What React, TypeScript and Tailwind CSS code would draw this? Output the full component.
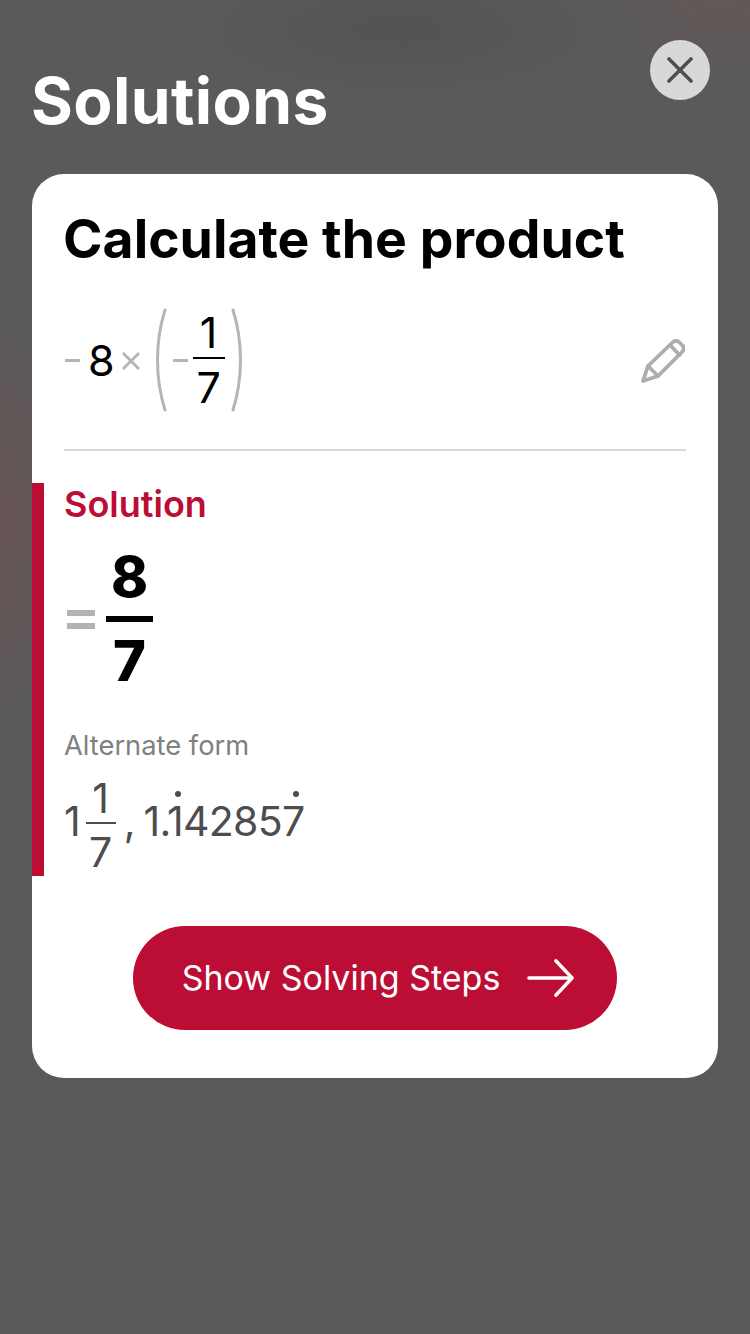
const SANS = 'font-["Inter","Liberation_Sans",sans-serif]';

// Tall bracket drawn around the fraction
function Paren({ flip = false }: { flip?: boolean }) {
  return (
    <svg width="12" height="104" viewBox="0 0 12 104" className={flip ? 'scale-x-[-1]' : ''}>
      <path d="M10 2 C 0 34, 0 70, 10 102" fill="none" stroke="#b5b5b5" strokeWidth="3" strokeLinecap="round" />
    </svg>
  );
}

function Fraction() {
  return (
    <div className="flex flex-col items-center w-[32px]">
      <span className="text-[43px] leading-[46px] h-[46px] -mt-[2px] text-black">1</span>
      <div className="w-full h-[2px] mt-[2px] bg-black" />
      <span className="text-[43px] leading-[46px] h-[50px] pt-[5px] text-black">7</span>
    </div>
  );
}

function Dotted({ children }: { children: string }) {
  return (
    <span className="relative">
      {children}
      <span className="absolute left-[calc(50%+3px)] -translate-x-1/2 top-[-5px] w-[6px] h-[6px] rounded-full bg-[#4d4d4d]" />
    </span>
  );
}

export default function App() {
  return (
    <div
      className={`w-[750px] h-[1334px] overflow-hidden bg-[#5a5a5a] bg-[radial-gradient(ellipse_70px_220px_at_0px_520px,#675454,transparent),radial-gradient(ellipse_120px_80px_at_720px_0px,#645757,transparent),radial-gradient(ellipse_220px_70px_at_400px_30px,#535353,transparent)] ${SANS}`}
    >
      <header className="flex items-start justify-between pl-[31px] pr-[40px] pt-[40px] h-[174px]">
        <h1 className="mt-[24px] text-[64px] leading-[74px] font-bold tracking-[0.4px] text-white">Solutions</h1>
        <button className="w-[60px] h-[60px] rounded-full bg-[#d8d8d8] flex items-center justify-center">
          <svg width="26" height="26" viewBox="0 0 26 26">
            <path d="M2 2 L24 24 M24 2 L2 24" stroke="#4f4f4f" strokeWidth="3.6" strokeLinecap="round" />
          </svg>
        </button>
      </header>

      <main className="mx-[32px] w-[686px] h-[904px] bg-white rounded-[32px] overflow-hidden">
        <div className="px-[32px]">
          <h2 className="-ml-[1px] pt-[32px] text-[53.5px] leading-[66px] font-bold text-black">Calculate the product</h2>

          <div className="mt-[36px] h-[104px] flex items-center justify-between pr-[1px]">
            <div className="flex items-center">
              <div className="ml-[1px] w-[15px] h-[3px] bg-[#b5b5b5]" />
              <span className="ml-[8px] text-[43px] leading-[46px] text-black">8</span>
              <svg width="20" height="20" viewBox="0 0 20 20" className="ml-[6px] mt-[2px]">
                <path d="M2 2 L18 18 M18 2 L2 18" stroke="#b5b5b5" strokeWidth="2.8" />
              </svg>
              <div className="ml-[14px]"><Paren /></div>
              <div className="ml-[6px] w-[15px] h-[3px] bg-[#b5b5b5]" />
              <div className="ml-[5px]"><Fraction /></div>
              <div className="ml-[6px]"><Paren flip /></div>
            </div>
            <svg width="44" height="44" viewBox="0 0 44 44" fill="none" stroke="#adadad" strokeWidth="3.8" strokeLinejoin="round" strokeLinecap="round" className="mt-[2px]">
              <path d="M2 42 L7 27 L32 3 Q35 1 38 3 L42 7 Q44 10 41 13 L17 37 Z" />
              <path d="M29 6 L38.5 16" />
              <path d="M7 27 L17 37" />
            </svg>
          </div>

          <div className="mt-[37px] h-[2px] bg-[#d9d9d9]" />
        </div>

        <section className="mt-[32px] h-[393px] border-l-[12px] border-[#bc0d35] pl-[20px]">
          <h3 className="text-[36px] leading-[42px] font-semibold text-[#bc0d35]">Solution</h3>

          <div className="mt-[19px] flex items-center h-[150px]">
            <div className="ml-[3px] w-[28px] flex flex-col gap-[7px]">
              <div className="h-[6px] bg-[#b3b3b3]" />
              <div className="h-[6px] bg-[#b3b3b3]" />
            </div>
            <div className="ml-[11px] w-[47px] flex flex-col items-center text-black font-extrabold">
              <span className="text-[56px] leading-[64px]">8</span>
              <div className="w-full h-[6px] my-[7px] bg-black" />
              <span className="text-[56px] leading-[64px]">7</span>
            </div>
          </div>

          <p className="mt-[35px] text-[27.3px] leading-[34px] text-[#808080]">Alternate form</p>

          <div className="mt-[10px] flex items-center text-[41px] text-[#4d4d4d] h-[96px]">
            <span className="leading-[46px]">1</span>
            <div className="ml-[5px] mt-[3px] flex flex-col items-center w-[30px]">
              <span className="leading-[46px] h-[46px]">1</span>
              <div className="w-full h-[2px] mt-[1px] bg-[#4d4d4d]" />
              <span className="leading-[46px] h-[46px] pt-[5px]">7</span>
            </div>
            <span className="ml-[8px] leading-[46px]">,</span>
            <span className="ml-[8px] leading-[46px] tracking-[-0.7px]">
              1.<Dotted>1</Dotted>4285<Dotted>7</Dotted>
            </span>
          </div>
        </section>

        <div className="mt-[50px] flex justify-center">
          <button className="w-[484px] h-[104px] rounded-full bg-[#bc0d35] flex items-center justify-center gap-[27px] pl-[7px] text-white">
            <span className="text-[34px] leading-[42px]">Show Solving Steps</span>
            <svg width="48" height="40" viewBox="0 0 50 40" fill="none" stroke="#fff" strokeWidth="3.6" strokeLinecap="round" strokeLinejoin="round">
              <path d="M2 20 H47 M30 2 L47 20 L30 38" />
            </svg>
          </button>
        </div>
      </main>
    </div>
  );
}
